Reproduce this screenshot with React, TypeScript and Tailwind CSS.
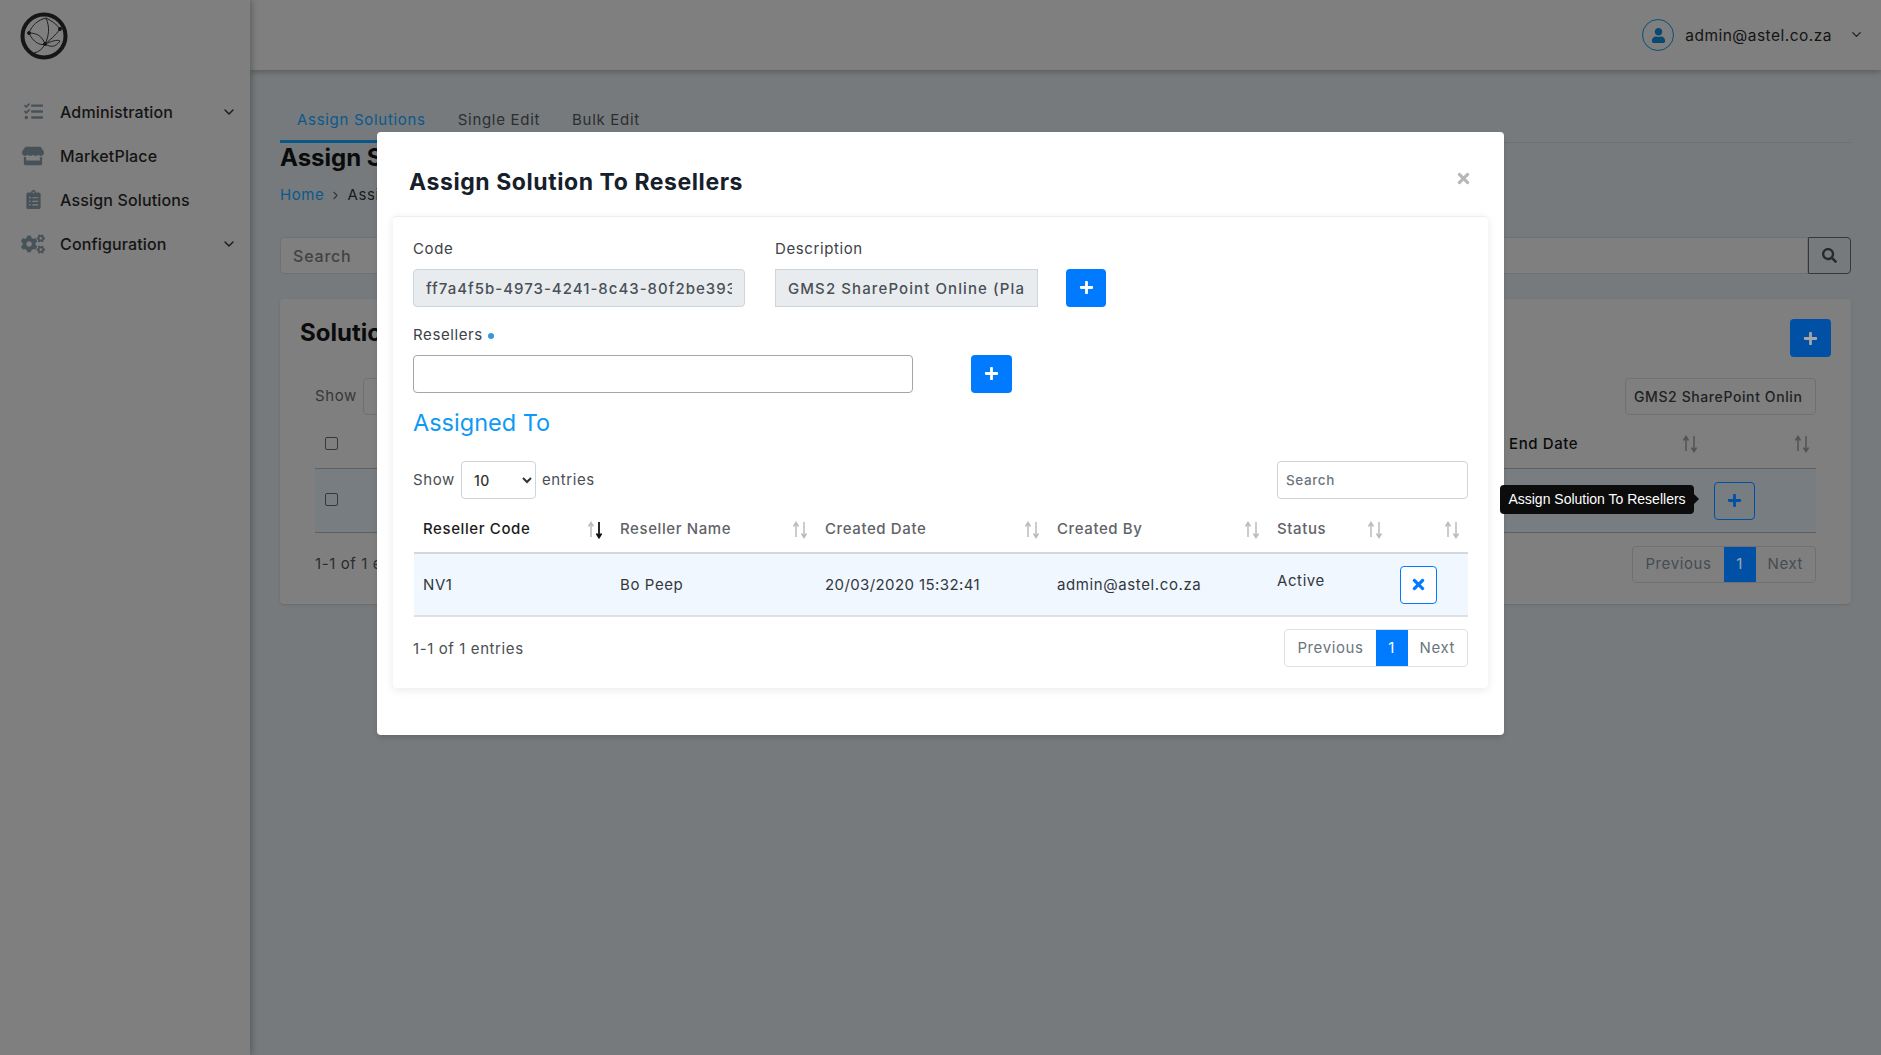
import { ChevronDown, ChevronRight } from 'lucide-react';
import { FaClipboardList, FaCogs, FaPlus, FaSearch, FaStore, FaTasks, FaTimes, FaUser } from 'react-icons/fa';

const navItems = [
  { label: 'Administration', icon: <FaTasks size={19} />, sub: true },
  { label: 'MarketPlace', icon: <FaStore size={22} />, sub: false },
  { label: 'Assign Solutions', icon: <FaClipboardList size={19} />, sub: false },
  { label: 'Configuration', icon: <FaCogs size={24} />, sub: true },
];

const columns = [
  { label: 'Reseller Code', width: 'w-[197px]', active: true },
  { label: 'Reseller Name', width: 'w-[205px]', active: false },
  { label: 'Created Date', width: 'w-[232px]', active: false },
  { label: 'Created By', width: 'w-[220px]', active: false },
  { label: 'Status', width: 'w-[123px]', active: false },
  { label: '', width: 'w-[77px]', active: false },
];

function SortArrows({ active = false, muted = false }: { active?: boolean; muted?: boolean }) {
  const up = muted ? '#7d8080' : '#b9bdc1';
  return (
    <svg width="16" height="18" viewBox="0 0 16 18" fill="none" className="shrink-0">
      <path d="M4 16V2M1.5 5.500L4 1.5 6.500 5.500" stroke={up} strokeWidth="1.5" />
      <path d="M12 1v15M9.500 12.500l2.500 4L14.500 12.500" stroke={active ? '#111' : up} strokeWidth={active ? 1.8 : 1.5} />
    </svg>
  );
}

function Logo() {
  return (
    <svg width="48" height="48" viewBox="0 0 48 48" fill="none" stroke="#222">
      <circle cx="24" cy="24" r="21.500" strokeWidth="4" />
      <g strokeWidth="0.900">
        <path d="M9 21c4 9 11 13 16 11s12-5 15-3" />
        <path d="M9 21c3-8 9-13 17-15M26 6c4 2 11 6 14 11" />
        <path d="M26 6c4 9 3 18-1 26s-9 8-11 9" />
        <path d="M25 32c-3-8-8-11-16-11M25 32c5-4 11-9 15-15M25 32c5 3 10 4 15-3" />
      </g>
      <circle cx="25" cy="32" r="1.500" fill="#222" />
      <circle cx="40" cy="17" r="1.500" fill="#222" />
      <circle cx="9" cy="21" r="1.500" fill="#222" />
    </svg>
  );
}

function Pager({ dim = false }: { dim?: boolean }) {
  return (
    <div className={`flex items-stretch rounded border text-[15px] ${dim ? 'h-[37px] border-[#a9adb1] text-[#6c757d]' : 'h-[38px] border-[#dee2e6] text-[#6c757d]'}`}>
      <span className="flex items-center px-[12px]">Previous</span>
      <span className="flex w-[32px] items-center justify-center bg-[#007bff] text-white">1</span>
      <span className="flex items-center px-[12px]">Next</span>
    </div>
  );
}

function PageBehind() {
  return (
    <div className="flex h-[1055px] w-full overflow-hidden bg-[#b6bcbf] text-[#2b2b2b]">
      <aside className="z-10 flex w-[250px] shrink-0 flex-col bg-[#c4c4c4] shadow-[2px_0_6px_rgba(0,0,0,0.25)]">
        <div className="flex h-[90px] items-start pl-[20px] pt-[12px]">
          <Logo />
        </div>
        <nav className="flex flex-col">
          {navItems.map((item) => (
            <div key={item.label} className="flex h-[44px] items-center pb-[1px] text-[16px] font-medium tracking-[0.15px]">
              <span className="flex w-[60px] shrink-0 justify-center pl-[6px] text-[#6e7e87]">{item.icon}</span>
              <span className="flex-1 text-[#1f1f1f]">{item.label}</span>
              {item.sub && <ChevronDown size={16} className="mr-[13px] text-[#222]" />}
            </div>
          ))}
        </nav>
      </aside>

      <div className="flex min-w-0 flex-1 flex-col">
        <header className="flex h-[70px] shrink-0 items-center justify-end bg-[#c4c4c4] pr-[17px] shadow-[0_2px_6px_rgba(0,0,0,0.25)]">
          <span className="flex h-[32px] w-[32px] items-center justify-center rounded-full border border-[#0d7ab8] text-[#0d6fae]">
            <FaUser size={15} />
          </span>
          <span className="ml-[11px] pt-[1px] text-[15.500px] tracking-[0.48px] text-[#222]">admin@astel.co.za</span>
          <ChevronDown size={15} className="ml-[17px] mb-[2px] text-[#333]" />
        </header>

        <main className="flex flex-1 flex-col px-[30px]">
          <div className="mt-[36px] flex h-[37px] items-center border-b border-[#a7adaf] text-[15px] tracking-[0.7px]">
            <span className="flex h-[37px] items-center border-b-[3px] border-[#0f85d2] px-[17px] pb-[5px] text-[#1188d8]">Assign Solutions</span>
            <span className="ml-[15px] pb-[8px] text-[#44484a]">Single Edit</span>
            <span className="ml-[32px] pb-[8px] text-[#44484a]">Bulk Edit</span>
          </div>
          <h1 className="mt-[1px] text-[24px] font-bold leading-[28px] text-[#111]">Assign Solutions</h1>
          <div className="mt-[12px] flex items-center text-[15px] leading-[22px] tracking-[0.6px]">
            <span className="text-[#1188d8]">Home</span>
            <ChevronRight size={13} className="mx-[5px] text-[#555]" />
            <span>Assign Solutions</span>
          </div>
          <div className="mt-[31px] flex h-[37px] items-stretch">
            <div className="flex flex-1 items-center rounded-l border border-[#a9adaf] bg-[#c4c4c4] pl-[12px] text-[16px] font-medium tracking-[0.8px] text-[#666]">Search</div>
            <div className="flex w-[43px] items-center justify-center rounded-r border border-[#50565a] text-[#3c4144]">
              <FaSearch size={15} />
            </div>
          </div>

          <section className="mt-[25px] h-[305px] rounded bg-[#c4c4c4] px-[20px] pt-[20px] shadow-sm">
            <div className="flex h-[38px] items-start justify-between">
              <h2 className="text-[24px] font-bold leading-[28px] text-[#111]">Solutions</h2>
              <span className="flex h-[38px] w-[41px] items-center justify-center rounded bg-[#007bff] text-white">
                <FaPlus size={15} />
              </span>
            </div>
            <div className="px-[15px] tracking-[0.6px]">
              <div className="mt-[21px] flex h-[37px] items-center justify-between text-[15px]">
                <div className="flex items-center">
                  <span className="text-[#555]">Show</span>
                  <span className="ml-[6px] h-[37px] w-[60px] rounded border border-[#a9adb1]" />
                </div>
                <span className="flex h-[37px] w-[191px] items-center overflow-hidden whitespace-nowrap rounded border border-[#a9adb1] pl-[8px] text-[14px] font-medium text-[#333]">GMS2 SharePoint Onlin</span>
              </div>
              <div className="flex h-[54px] items-center border-b border-[#8f9396] pl-[10px] pt-[3px] text-[15px] font-medium">
                <input type="checkbox" readOnly className="h-[13px] w-[13px] appearance-none rounded-[2px] border border-[#555]" />
                <span className="ml-auto w-[307px] pt-[2px] text-[#111]">
                  <span className="flex items-center">
                    End Date
                    <span className="ml-[104px]"><SortArrows muted /></span>
                    <span className="ml-[96px]"><SortArrows muted /></span>
                  </span>
                </span>
              </div>
              <div className="flex h-[64px] items-center border-b border-[#8f9396] bg-[#b8c0c6] pl-[10px]">
                <input type="checkbox" readOnly className="mb-[2px] h-[13px] w-[13px] appearance-none rounded-[2px] border border-[#555]" />
                <span className="ml-auto mr-[61px] flex h-[38px] w-[41px] items-center justify-center rounded border border-[#007bff] text-[#007bff]">
                  <FaPlus size={15} />
                </span>
              </div>
              <div className="mt-[13px] flex items-center justify-between text-[15px]">
                <span className="text-[#444]">1-1 of 1 entries</span>
                <Pager dim />
              </div>
            </div>
          </section>
        </main>
      </div>
    </div>
  );
}

function Modal() {
  return (
    <div className="mt-[132px] h-[603px] w-[1127px] rounded bg-white font-normal text-[#212529] shadow-md">
      <div className="flex h-[84px] items-start justify-between pl-[32px] pr-[32px] pt-[34px]">
        <h2 className="text-[23px] font-bold leading-[32px] tracking-[0.57px] text-[#16202b]">Assign Solution To Resellers</h2>
        <FaTimes size={17} className="mt-[4px] text-[#b7b7b7]" />
      </div>
      <div className="mx-[16px] h-[472px] rounded border-t border-[#eceeef] bg-white px-[20px] pt-[21px] tracking-[0.6px] shadow-[0_2px_10px_rgba(0,0,0,0.09)]">
        <div className="flex items-end">
          <div className="w-[332px]">
            <label className="block text-[15px] leading-[22px] text-[#3d4248]">Code</label>
            <input readOnly value="ff7a4f5b-4973-4241-8c43-80f2be393e70" className="mt-[9px] h-[38px] w-full rounded border border-[#ced4da] bg-[#e9ecef] px-[12px] text-[15px] font-medium tracking-[1px] text-[#495057] outline-none" />
          </div>
          <div className="ml-[30px] w-[263px]">
            <label className="block text-[15px] leading-[22px] text-[#3d4248]">Description</label>
            <input readOnly value="GMS2 SharePoint Online (Plan 2)" className="mt-[9px] h-[38px] w-full border border-[#ced4da] bg-[#e9ecef] px-[12px] text-[15px] font-medium tracking-[1.1px] text-[#495057] outline-none" />
          </div>
          <button className="ml-[28px] flex h-[38px] w-[40px] items-center justify-center rounded bg-[#007bff] text-white">
            <FaPlus size={15} className="-translate-y-px" />
          </button>
        </div>

        <label className="mt-[17px] flex items-center text-[15px] leading-[22px] text-[#3d4248]">
          Resellers
          <span className="ml-[5px] mt-[2px] h-[6px] w-[6px] rounded-full bg-[#3498db]" />
        </label>
        <div className="mt-[9px] flex">
          <input className="h-[38px] w-[500px] rounded border border-[#a6a6a6] bg-white outline-none" />
          <button className="ml-[58px] flex h-[38px] w-[41px] items-center justify-center rounded bg-[#007bff] text-white">
            <FaPlus size={15} className="-translate-y-px" />
          </button>
        </div>

        <h3 className="mt-[14px] text-[23.500px] leading-[32px] tracking-normal text-[#0d99f5]">Assigned To</h3>

        <div className="mt-[22px] flex h-[38px] items-center text-[15px] text-[#4a4f55]">
          <span>Show</span>
          <select defaultValue="10" className="ml-[6px] h-[38px] w-[75px] rounded border border-[#ced4da] bg-white pl-[8px] text-[14px] font-medium text-[#333] outline-none">
            <option>10</option>
          </select>
          <span className="ml-[6px]">entries</span>
          <div className="ml-auto flex h-[38px] w-[191px] items-center rounded border border-[#ced4da] pl-[8px] text-[13.500px] font-medium text-[#6c757d]">Search</div>
        </div>

        <table className="ml-px w-[1054px] table-fixed border-collapse text-[15px]">
          <thead>
            <tr className="h-[54px] border-b-2 border-[#d4d8dc]">
              {columns.map((col) => (
                <th key={col.label} className={`${col.width} pl-[9px] pr-[8px] pt-[8px] text-left font-medium`}>
                  <span className="flex items-center justify-between">
                    <span className={col.active ? 'text-[#1c1c1c]' : 'text-[#5f6368]'}>{col.label}</span>
                    <SortArrows active={col.active} />
                  </span>
                </th>
              ))}
            </tr>
          </thead>
          <tbody>
            <tr className="h-[63px] border-b-2 border-[#dfe2e5] bg-[#f0f7ff] text-[#33383d]">
              <td className="pl-[9px] pt-[2px]">NV1</td>
              <td className="pl-[9px] pt-[2px]">Bo Peep</td>
              <td className="pl-[9px] pt-[2px] tracking-[0.4px]">20/03/2020 15:32:41</td>
              <td className="pl-[9px] pt-[2px]">admin@astel.co.za</td>
              <td className="pb-[6px] pl-[9px]">Active</td>
              <td className="pl-[9px]">
                <button className="flex h-[38px] w-[37px] items-center justify-center rounded border border-[#007bff] bg-white text-[#007bff]">
                  <FaTimes size={17} />
                </button>
              </td>
            </tr>
          </tbody>
        </table>

        <div className="mt-[12px] flex items-center justify-between text-[15px] text-[#4a4f55]">
          <span className="pt-[2px]">1-1 of 1 entries</span>
          <Pager />
        </div>
      </div>
    </div>
  );
}

export default function App() {
  return (
    <div className="relative h-[1055px] w-full overflow-hidden font-['Inter',sans-serif]">
      <PageBehind />
      <div className="absolute inset-0 z-20 flex items-start justify-center bg-black/[0.35]">
        <Modal />
      </div>
      <div className="absolute left-[1500px] top-[485px] z-30 flex h-[29px] w-[194px] items-center justify-center rounded bg-[#0c0c0c] font-['Liberation_Sans',sans-serif] text-[14px] text-white">
        Assign Solution To Resellers
        <span className="absolute -right-[5px] top-[9px] h-0 w-0 border-y-[5px] border-l-[5px] border-y-transparent border-l-[#0c0c0c]" />
      </div>
    </div>
  );
}
